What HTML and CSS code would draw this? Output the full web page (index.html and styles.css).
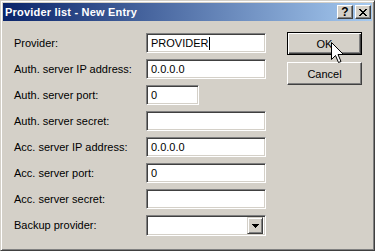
FILE: index.html
```html
<!DOCTYPE html>
<html lang="en">

<head>
    <meta charset="UTF-8">
    <meta name="viewport" content="width=device-width, initial-scale=1.0">
    <title>Provider list - New Entry</title>
    <link rel="stylesheet" href="styles.css">
</head>

<body>
    <div class="window">
        <div class="titlebar">
            <span class="title">Provider list - New Entry</span>
            <div class="title-buttons">
                <div class="tbtn help">?</div>
                <div class="tbtn close">
                    <svg width="8" height="7" viewBox="0 0 8 7">
                        <path d="M0 0h2v1h-2zM6 0h2v1h-2zM1 1h2v1h-2zM5 1h2v1h-2zM2 2h4v1h-4zM3 3h2v1h-2zM2 4h4v1h-4zM1 5h2v1h-2zM5 5h2v1h-2zM0 6h2v1h-2zM6 6h2v1h-2z" fill="#000"/>
                    </svg>
                </div>
            </div>
        </div>

        <div class="content">
            <div class="form">
                <label>Provider:</label>
                <div class="edit"><span class="value">PROVIDER</span><span class="caret"></span></div>

                <label>Auth. server IP address:</label>
                <div class="edit"><span class="value">0.0.0.0</span></div>

                <label>Auth. server port:</label>
                <div class="edit short"><span class="value">0</span></div>

                <label>Auth. server secret:</label>
                <div class="edit"></div>

                <label>Acc. server IP address:</label>
                <div class="edit"><span class="value">0.0.0.0</span></div>

                <label>Acc. server port:</label>
                <div class="edit"><span class="value">0</span></div>

                <label>Acc. server secret:</label>
                <div class="edit"></div>

                <label>Backup provider:</label>
                <div class="edit combo">
                    <div class="drop">
                        <svg width="7" height="4" viewBox="0 0 7 4">
                            <path d="M0 0h7v1h-7zM1 1h5v1h-5zM2 2h3v1h-3zM3 3h1v1h-1z" fill="#000"/>
                        </svg>
                    </div>
                </div>
            </div>

            <div class="actions">
                <button class="btn default">OK</button>
                <button class="btn">Cancel</button>
            </div>
        </div>

        <svg class="pointer" width="13" height="22" viewBox="0 0 13 22">
            <path d="M0.5 0.5V17.5L4.5 13.5L7.5 20.5L10 19.5L7 12.5H12.5Z" fill="#fff" stroke="#000" stroke-width="1"/>
        </svg>
    </div>
</body>

</html>
```

FILE: styles.css
```css
body {
    margin: 0;
    font-family: "Liberation Sans", Arial, sans-serif;
    font-size: 11px;
    color: #000;
}

.window {
    position: relative;
    width: 375px;
    height: 251px;
    box-sizing: border-box;
    background-color: #d4d0c8;
    border: 1px solid;
    border-color: #d4d0c8 #404040 #404040 #d4d0c8;
    box-shadow: inset 1px 1px #fff, inset -1px -1px #808080;
    padding: 2px;
}

.titlebar {
    height: 18px;
    display: flex;
    align-items: center;
    justify-content: space-between;
    padding-left: 2px;
    background: linear-gradient(to right, #0a246a, #a6caf0);
}

.title {
    color: #fff;
    font-weight: bold;
    font-size: 11px;
    letter-spacing: 0.2px;
}

.title-buttons {
    display: flex;
    gap: 2px;
    margin-right: 1px;
}

.tbtn {
    width: 16px;
    height: 14px;
    box-sizing: border-box;
    display: flex;
    align-items: center;
    justify-content: center;
    background-color: #d4d0c8;
    border: 1px solid;
    border-color: #fff #404040 #404040 #fff;
    box-shadow: inset -1px -1px #808080;
}

.tbtn.help {
    font-weight: bold;
    font-size: 12px;
    line-height: 12px;
    padding-bottom: 1px;
}

.content {
    display: flex;
    align-items: flex-start;
    padding: 12px 0 0 11px;
}

.form {
    display: grid;
    grid-template-columns: 132px 120px;
    grid-auto-rows: 20px;
    row-gap: 6px;
}

.form label {
    display: flex;
    align-items: center;
    padding-bottom: 1px;
}

.edit {
    position: relative;
    box-sizing: border-box;
    width: 120px;
    height: 20px;
    display: flex;
    align-items: center;
    padding-left: 3px;
    background-color: #fff;
    border: 1px solid;
    border-color: #808080 #fff #fff #808080;
    box-shadow: inset 1px 1px #404040, inset -1px -1px #d4d0c8;
}

.edit.short {
    width: 53px;
}

.value {
    padding-left: 1px;
}

.caret {
    width: 1px;
    height: 13px;
    margin-left: 1px;
    background-color: #000;
}

.edit.combo {
    justify-content: flex-end;
    padding: 2px;
    height: 21px;
}

.drop {
    width: 16px;
    height: 17px;
    box-sizing: border-box;
    display: flex;
    align-items: center;
    justify-content: center;
    background-color: #d4d0c8;
    border: 1px solid;
    border-color: #d4d0c8 #404040 #404040 #d4d0c8;
    box-shadow: inset 1px 1px #fff, inset -1px -1px #808080;
}

.actions {
    display: flex;
    flex-direction: column;
    gap: 7px;
    margin: -1px 0 0 21px;
}

.btn {
    width: 75px;
    height: 23px;
    padding: 0;
    font-family: "Liberation Sans", Arial, sans-serif;
    font-size: 11px;
    color: #000;
    background-color: #d4d0c8;
    border: 1px solid;
    border-color: #fff #404040 #404040 #fff;
    box-shadow: inset -1px -1px #808080;
}

.btn.default {
    border-color: #000;
    box-shadow: inset 1px 1px #fff, inset -1px -1px #404040, inset -2px -2px #808080;
}

.pointer {
    position: absolute;
    left: 330px;
    top: 41px;
}
```
